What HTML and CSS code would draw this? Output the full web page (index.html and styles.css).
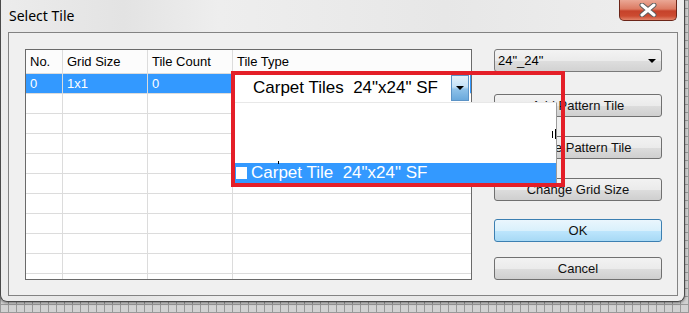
FILE: index.html
```html
<!DOCTYPE html>
<html lang="en">
<head>
    <meta charset="UTF-8">
    <meta name="viewport" content="width=device-width, initial-scale=1.0">
    <title>Select Tile</title>
    <link rel="stylesheet" href="styles.css">
</head>
<body>

<div class="window">
    <div class="titlebar">
        <span class="title">Select Tile</span>
        <button class="close" aria-label="Close">
            <svg width="18" height="14" viewBox="0 0 18 14">
                <path d="M3 2 L15 12 M15 2 L3 12" stroke="#5e5e5e" stroke-width="5" stroke-linecap="round"/>
                <path d="M3 2 L15 12 M15 2 L3 12" stroke="#ffffff" stroke-width="3" stroke-linecap="round"/>
            </svg>
        </button>
    </div>

    <div class="client">
        <div class="grid-box">
            <table class="grid">
                <colgroup>
                    <col class="col-no">
                    <col class="col-size">
                    <col class="col-count">
                    <col>
                </colgroup>
                <thead>
                    <tr>
                        <th>No.</th>
                        <th>Grid Size</th>
                        <th>Tile Count</th>
                        <th>Tile Type</th>
                    </tr>
                </thead>
                <tbody>
                    <tr class="selected"><td>0</td><td>1x1</td><td>0</td><td></td></tr>
                    <tr><td></td><td></td><td></td><td></td></tr>
                    <tr><td></td><td></td><td></td><td></td></tr>
                    <tr><td></td><td></td><td></td><td></td></tr>
                    <tr><td></td><td></td><td></td><td></td></tr>
                    <tr><td></td><td></td><td></td><td></td></tr>
                    <tr><td></td><td></td><td></td><td></td></tr>
                    <tr><td></td><td></td><td></td><td></td></tr>
                    <tr><td></td><td></td><td></td><td></td></tr>
                    <tr><td></td><td></td><td></td><td></td></tr>
                    <tr><td></td><td></td><td></td><td></td></tr>
                    <tr><td></td><td></td><td></td><td></td></tr>
                </tbody>
            </table>
        </div>

        <div class="side">
            <div class="select"><span>24"_24"</span><span class="caret"></span></div>
            <button class="btn btn-add">Add Pattern Tile</button>
            <button class="btn btn-gap">Delete Pattern Tile</button>
            <button class="btn btn-gap">Change Grid Size</button>
            <button class="btn btn-ok">OK</button>
            <button class="btn btn-cancel">Cancel</button>
        </div>
    </div>
</div>

<!-- open tile type dropdown, outlined in red -->
<div class="callout">
    <div class="combo">
        <span>Carpet Tiles&nbsp; 24"x24" SF</span>
        <span class="drop-btn"><span class="caret"></span></span>
    </div>
    <div class="list">
        <span class="mark mark-dot"></span>
        <span class="mark mark-a"></span>
        <span class="mark mark-b"></span>
        <div class="list-item active"><span class="swatch"></span>Carpet Tile&nbsp; 24"x24" SF</div>
    </div>
</div>

</body>
</html>
```

FILE: styles.css
```css
body {
    margin: 0;
    width: 689px;
    height: 313px;
    overflow: hidden;
    position: relative;
    font-family: "Liberation Sans", Arial, sans-serif;
    font-size: 13px;
    color: #000;
    background-color: #d2d2d2;
    background-image:
        repeating-linear-gradient(90deg, #999 0 1px, transparent 1px 8px),
        repeating-linear-gradient(0deg, #999 0 1px, transparent 1px 8px);
}
.window {
    width: 685px;
    height: 302px;
    box-sizing: border-box;
    border: 1px solid #4a4a4a;
    border-top: none;
    border-radius: 0 0 7px 7px;
    background: linear-gradient(90deg, #ececec 0%, #e3e3e3 18%, #eeeeee 32%, #e7e7e7 65%, #efefef 100%);
    box-shadow: 0 1px 3px rgba(0, 0, 0, 0.45);
}
.titlebar {
    display: flex;
    height: 32px;
}
.title {
    font-family: "Noto Sans", sans-serif;
    font-size: 14px;
    line-height: 20px;
    padding: 6px 0 0 8px;
}
.close {
    margin: 0 7px 0 auto;
    width: 58px;
    height: 21px;
    padding: 0;
    border: 1px solid #6b2518;
    border-top: none;
    border-radius: 0 0 5px 5px;
    background: linear-gradient(#eaa795 0%, #dc7a62 45%, #c6422a 55%, #cc4b31 80%, #e2846a 100%);
    display: flex;
    align-items: center;
    justify-content: center;
}
.client {
    margin-left: 7px;
    width: 670px;
    height: 264px;
    box-sizing: border-box;
    border: 1px solid #838383;
    background: #f0f0f0;
    padding: 16px 0 0 16px;
    display: flex;
    align-items: flex-start;
    gap: 22px;
}
.grid-box {
    width: 447px;
    height: 231px;
    box-sizing: border-box;
    border: 1px solid #6a6a6a;
    background: #fff;
    overflow: hidden;
}
.grid {
    width: 100%;
    table-layout: fixed;
    border-collapse: separate;
    border-spacing: 0;
}
.col-no { width: 37px; }
.col-size { width: 85px; }
.col-count { width: 85px; }
.grid th, .grid td {
    box-sizing: border-box;
    text-align: left;
    font-weight: normal;
    padding: 0 0 0 4px;
    border-right: 1px solid #dcdcdc;
    border-bottom: 1px solid #dcdcdc;
    white-space: nowrap;
    overflow: hidden;
}
.grid th:last-child, .grid td:last-child {
    border-right: none;
}
.grid thead tr {
    height: 24px;
}
.grid tbody tr {
    height: 20px;
}
.grid th {
    line-height: 23px;
    background: #fcfcfc;
}
.grid td {
    line-height: 19px;
}
.grid .selected td {
    background: #3399ff;
    color: #fff;
}
.side {
    width: 168px;
    display: flex;
    flex-direction: column;
}
.select {
    height: 23px;
    box-sizing: border-box;
    border: 1px solid #7a7a7a;
    border-radius: 3px;
    background: linear-gradient(#f3f3f3 0%, #ebebeb 50%, #dedede 51%, #d2d2d2 100%);
    display: flex;
    align-items: center;
    padding: 0 5px 0 3px;
}
.caret {
    width: 0;
    height: 0;
    border-left: 4px solid transparent;
    border-right: 4px solid transparent;
    border-top: 4px solid #000;
}
.select .caret {
    margin-left: auto;
}
.btn {
    height: 23px;
    box-sizing: border-box;
    padding: 0;
    border: 1px solid #707070;
    border-radius: 3px;
    background: linear-gradient(#f2f2f2 0%, #ebebeb 50%, #dddddd 51%, #cfcfcf 100%);
    font-family: "Liberation Sans", Arial, sans-serif;
    font-size: 13px;
    color: #111;
}
.btn-add { margin-top: 22px; }
.btn-gap { margin-top: 19px; }
.btn-ok {
    margin-top: 18px;
    border-color: #3c7fb1;
    background: linear-gradient(#eaf6fd 0%, #d9f0fc 50%, #bee6fd 51%, #a7d9f5 100%);
}
.btn-cancel { margin-top: 15px; }
.callout {
    position: absolute;
    left: 231px;
    top: 71px;
    width: 334px;
    height: 116px;
    box-sizing: border-box;
    border: 4px solid #e41f28;
}
.combo {
    width: 235px;
    height: 26px;
    box-sizing: border-box;
    background: #fff;
    padding-left: 18px;
    display: flex;
    align-items: center;
    font-size: 17px;
}
.drop-btn {
    margin: 0 1px 0 auto;
    width: 18px;
    height: 26px;
    box-sizing: border-box;
    border: 1px solid #5c93c6;
    background: linear-gradient(#e3f1fb 0%, #c4e1f6 45%, #8fc2e9 55%, #6aa9dc 100%);
    display: flex;
    align-items: center;
    justify-content: center;
}
.list {
    position: relative;
    margin-top: 1px;
    width: 322px;
    height: 81px;
    box-sizing: border-box;
    background: #fff;
    border-top: 1px solid #e8e8e8;
    border-right: 1px solid #9c9c9c;
    display: flex;
    flex-direction: column;
    justify-content: flex-end;
}
.mark {
    position: absolute;
    width: 1px;
    background: #000;
}
.mark-dot { left: 43px; top: 58px; height: 3px; }
.mark-a { left: 317px; top: 28px; height: 7px; }
.mark-b { left: 320px; top: 26px; height: 10px; }
.list-item {
    height: 20px;
    display: flex;
    align-items: center;
    font-size: 17px;
}
.list-item.active {
    background: #3399ff;
    color: #fff;
}
.swatch {
    width: 11px;
    height: 12px;
    background: #fff;
    margin: 0 4px 0 1px;
}
```
